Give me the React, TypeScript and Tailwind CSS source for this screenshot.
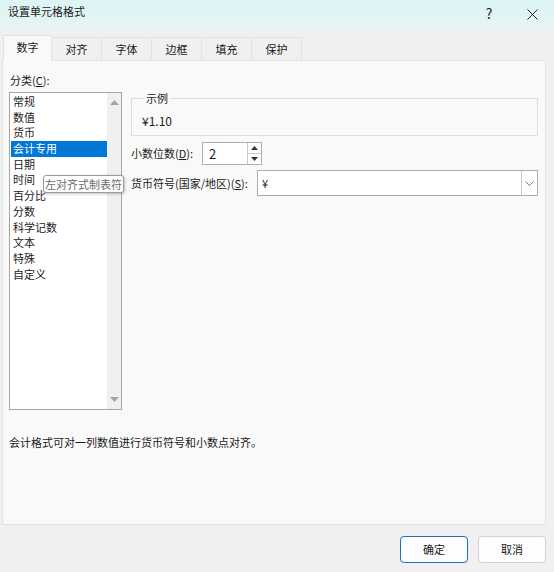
import { useState } from "react";

const tabs = ["数字", "对齐", "字体", "边框", "填充", "保护"];

const categories = [
  "常规",
  "数值",
  "货币",
  "会计专用",
  "日期",
  "时间",
  "百分比",
  "分数",
  "科学记数",
  "文本",
  "特殊",
  "自定义",
];

const App = () => {
  const [activeTab, setActiveTab] = useState(0);
  const [selected, setSelected] = useState(3);
  const [decimals, setDecimals] = useState(2);

  return (
    <div className="w-[554px] h-[572px] bg-[#f0f0f0] flex flex-col text-[11px] text-[#1a1a1a] font-['Microsoft_YaHei','Noto_Sans_CJK_SC',sans-serif] overflow-hidden">
      {/* title bar */}
      <div className="h-[30px] shrink-0 flex items-center pl-[8px] bg-gradient-to-b from-[#dcf4f5] to-[#eaf3f3]">
        <span className="leading-none -mt-[8px]">设置单元格格式</span>
        <span className="ml-auto w-[10px] text-center text-[14px] -mt-[3px]">?</span>
        <button className="ml-[32px] mr-[16px] w-[12px] h-[12px] flex items-center justify-center -mt-[2px]">
          <svg width="11" height="11" viewBox="0 0 11 11">
            <path d="M0.5 0.5L10.5 10.5M10.5 0.5L0.5 10.5" stroke="#222" strokeWidth="1" />
          </svg>
        </button>
      </div>

      {/* tabs */}
      <div className="h-[30px] shrink-0 flex items-end pl-[3px]">
        {tabs.map((tab, index) =>
          index === activeTab ? (
            <button
              key={tab}
              onClick={() => setActiveTab(index)}
              className="relative z-10 w-[49px] h-[26px] -mb-[1px] bg-[#f9f9f9] border border-b-0 border-[#e3e3e3] pb-[2px]"
            >
              {tab}
            </button>
          ) : (
            <button
              key={tab}
              onClick={() => setActiveTab(index)}
              className="w-[50px] h-[23px] bg-[#f0f0f0] border border-l-0 border-b-0 border-[#e3e3e3]"
            >
              {tab}
            </button>
          )
        )}
      </div>

      {/* number page */}
      <div className="ml-[2px] w-[544px] h-[465px] shrink-0 bg-[#f9f9f9] border border-[#e3e3e3] flex flex-col">
        <div className="flex">
          <div className="pl-[6px] w-[128px] shrink-0">
            <p className="mt-[11px] leading-[16px] pl-[1px]">
              分类(<span className="underline">C</span>):
            </p>
            <div className="relative mt-[4px] w-[113px] h-[318px] bg-white border border-[#a5a5a5] flex">
              <ul className="flex-1 pt-[1px] pl-[1px]">
                {categories.map((item, index) => (
                  <li
                    key={item}
                    onClick={() => setSelected(index)}
                    className={
                      "h-[15.7px] leading-[15.7px] pl-[2px] cursor-default " +
                      (index === selected ? "bg-[#0078d7] text-white" : "")
                    }
                  >
                    {item}
                  </li>
                ))}
              </ul>
              <div className="w-[14px] bg-[#f0f0f0] flex flex-col justify-between items-center py-[7px]">
                <svg width="9" height="5" viewBox="0 0 9 5">
                  <path d="M0 5L4.5 0L9 5Z" fill="#a3a3a3" />
                </svg>
                <svg width="9" height="5" viewBox="0 0 9 5">
                  <path d="M0 0L9 0L4.5 5Z" fill="#a3a3a3" />
                </svg>
              </div>

              {/* hover tip over the list */}
              <div className="absolute left-[33px] top-[82px] w-[81px] h-[18px] bg-white border border-[#9a9a9a] rounded-[3px] shadow-[1px_1px_3px_rgba(0,0,0,0.25)] text-[#6b6b6b] leading-[16px] pl-[1px] whitespace-nowrap">
                左对齐式制表符
              </div>
            </div>
          </div>

          <div className="w-[407px] pt-[29px]">
            <fieldset className="border border-[#dedede] h-[46px] pl-[10px]">
              <legend className="ml-[2px] px-[2px] leading-[16px]">示例</legend>
              <p className="mt-[7px] leading-[16px] text-[12px]">¥1.10</p>
            </fieldset>

            <div className="mt-[6px] flex items-center">
              <span className="w-[71px] whitespace-nowrap">
                小数位数(<span className="underline">D</span>):
              </span>
              <div className="w-[60px] h-[23px] bg-white border border-[#adadad] flex">
                <span className="flex-1 pl-[6px] leading-[21px] text-[13px]">{decimals}</span>
                <div className="w-[14px] flex flex-col border-l border-[#c8c8c8]">
                  <button
                    onClick={() => setDecimals(decimals + 1)}
                    className="flex-1 flex items-center justify-center border-b border-[#c8c8c8]"
                  >
                    <svg width="7" height="4" viewBox="0 0 7 4">
                      <path d="M0 4L3.5 0L7 4Z" fill="#333" />
                    </svg>
                  </button>
                  <button
                    onClick={() => setDecimals(Math.max(0, decimals - 1))}
                    className="flex-1 flex items-center justify-center"
                  >
                    <svg width="7" height="4" viewBox="0 0 7 4">
                      <path d="M0 0L7 0L3.5 4Z" fill="#333" />
                    </svg>
                  </button>
                </div>
              </div>
            </div>

            <div className="mt-[5px] flex items-center">
              <span className="w-[126px] whitespace-nowrap">
                货币符号(国家/地区)(<span className="underline">S</span>):
              </span>
              <div className="flex-1 h-[26px] bg-white border border-[#adadad] flex">
                <span className="flex-1 pl-[4px] leading-[24px]">¥</span>
                <div className="w-[16px] border-l border-[#c8c8c8] flex items-center justify-center">
                  <svg width="9" height="5" viewBox="0 0 9 5">
                    <path d="M0.5 0.5L4.5 4.5L8.5 0.5" stroke="#777" fill="none" />
                  </svg>
                </div>
              </div>
            </div>
          </div>
        </div>

        <p className="mt-[24px] pl-[6px] leading-[16px]">
          会计格式可对一列数值进行货币符号和小数点对齐。
        </p>
      </div>

      {/* dialog buttons */}
      <div className="flex justify-end gap-[10px] pr-[8px] mt-[11px]">
        <button className="w-[68px] h-[27px] bg-[#fdfdfd] border border-[#1f6fbf] rounded-[4px]">
          确定
        </button>
        <button className="w-[68px] h-[27px] bg-[#fdfdfd] border border-[#d3d3d3] rounded-[4px]">
          取消
        </button>
      </div>
    </div>
  );
};

export default App;
